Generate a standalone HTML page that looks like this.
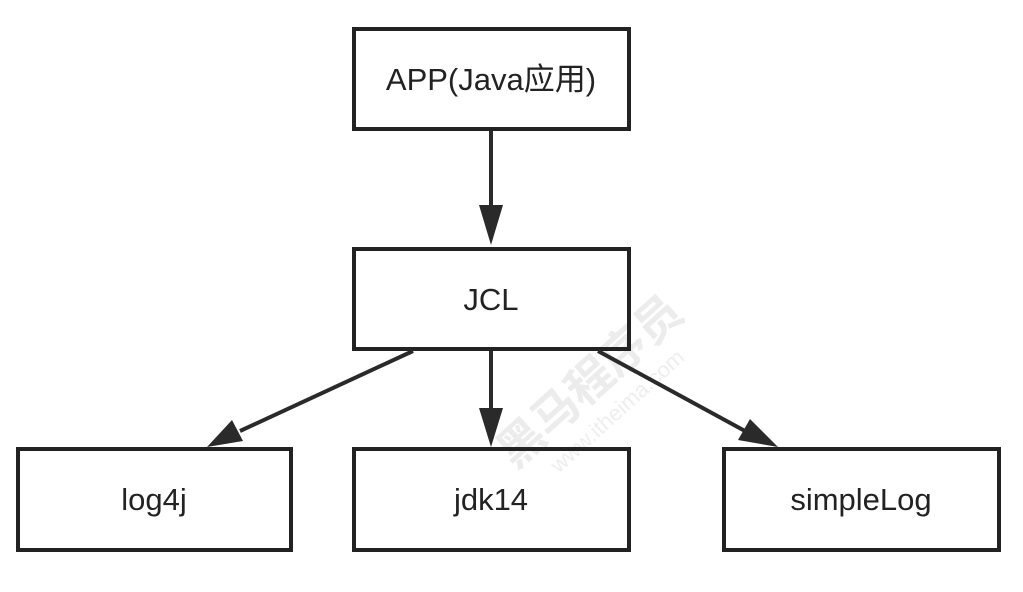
<!DOCTYPE html>
<html><head><meta charset="utf-8"><style>
html,body{margin:0;padding:0;background:#fff;width:1023px;height:592px;overflow:hidden}
text{font-family:"Liberation Sans","Noto Sans CJK SC",sans-serif;font-size:31px;fill:#222}
.wm{font-size:46px;fill:#ececec;font-weight:bold}
.wm2{font-size:22px;fill:#eeeeee}
</style></head><body>
<svg width="1023" height="592" viewBox="0 0 1023 592" xmlns="http://www.w3.org/2000/svg">
<g transform="translate(515,470) rotate(-42)">
<text class="wm" x="0" y="0">黑马程序员</text>
<text class="wm2" x="30" y="32">www.itheima.com</text>
</g>
<g fill="none" stroke="#222" stroke-width="4">
<rect x="354" y="29" width="275" height="100"/>
<rect x="354" y="249" width="275" height="100"/>
<rect x="18" y="449" width="273" height="101"/>
<rect x="354" y="449" width="275" height="101"/>
<rect x="724" y="449" width="275" height="101"/>
</g>
<g stroke="#2a2a2a" stroke-width="4">
<line x1="491" y1="131" x2="491" y2="210"/>
<line x1="491" y1="351" x2="491" y2="410"/>
<line x1="413" y1="351" x2="240" y2="431"/>
<line x1="598" y1="351" x2="745" y2="431"/>
</g>
<g fill="#2a2a2a">
<polygon points="479,205 503,205 491,245"/>
<polygon points="479,408 503,408 491,447"/>
<polygon points="207,447 232,420 243,441"/>
<polygon points="778,447 738,440 750,419"/>
</g>
<text x="491" y="90" text-anchor="middle">APP(Java应用)</text>
<text x="491" y="310" text-anchor="middle">JCL</text>
<text x="154" y="510" text-anchor="middle">log4j</text>
<text x="491" y="510" text-anchor="middle">jdk14</text>
<text x="861" y="510" text-anchor="middle">simpleLog</text>
</svg>
</body></html>
